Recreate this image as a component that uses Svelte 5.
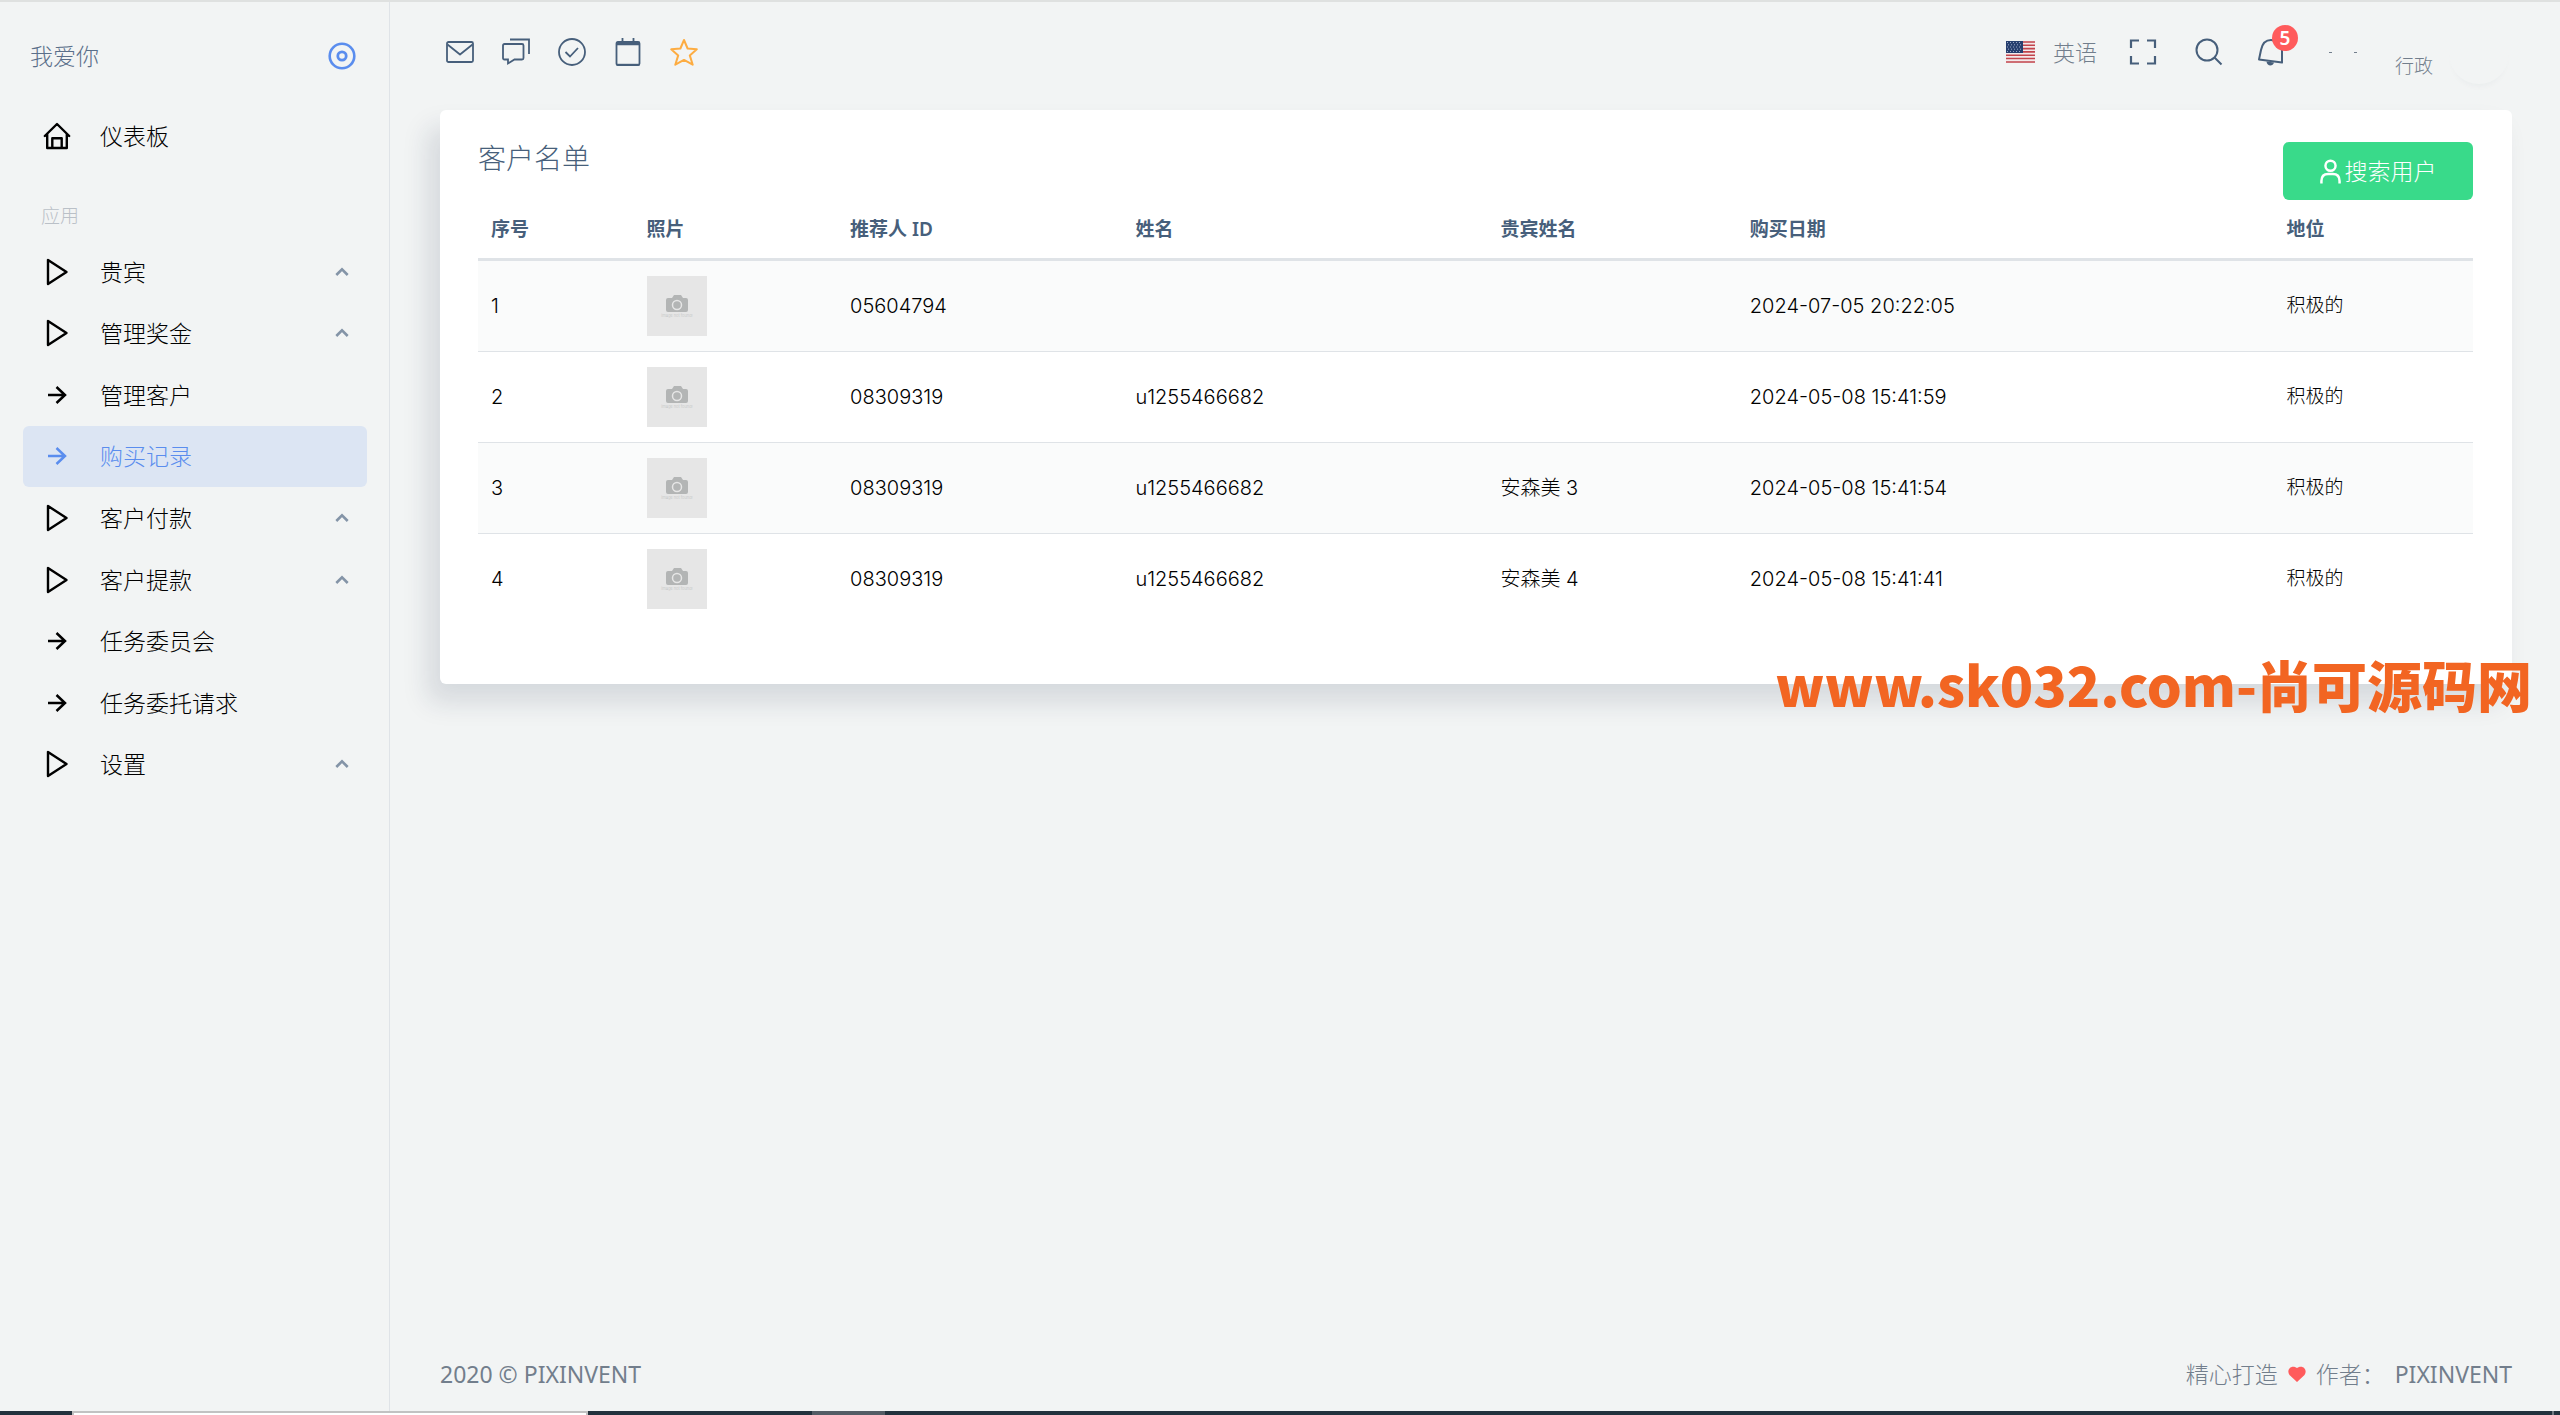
<script lang="ts">
	type MenuItem = { label: string; icon: 'play' | 'arrow'; group?: boolean; active?: boolean };

	const menu: MenuItem[] = [
		{ label: '贵宾', icon: 'play', group: true },
		{ label: '管理奖金', icon: 'play', group: true },
		{ label: '管理客户', icon: 'arrow' },
		{ label: '购买记录', icon: 'arrow', active: true },
		{ label: '客户付款', icon: 'play', group: true },
		{ label: '客户提款', icon: 'play', group: true },
		{ label: '任务委员会', icon: 'arrow' },
		{ label: '任务委托请求', icon: 'arrow' },
		{ label: '设置', icon: 'play', group: true }
	];

	const columns = ['序号', '照片', '推荐人 ID', '姓名', '贵宾姓名', '购买日期', '地位'];

	const rows = [
		{ referrer: '05604794', name: '', vip: '', date: '2024-07-05 20:22:05' },
		{ referrer: '08309319', name: 'u1255466682', vip: '', date: '2024-05-08 15:41:59' },
		{ referrer: '08309319', name: 'u1255466682', vip: '安森美 3', date: '2024-05-08 15:41:54' },
		{ referrer: '08309319', name: 'u1255466682', vip: '安森美 4', date: '2024-05-08 15:41:41' }
	];
</script>

<div class="page">
	<div class="shell">
		<aside class="sidebar">
			<div class="brand">
				<a href="#home">我爱你</a>
				<button type="button" class="icon-btn pin" aria-label="Toggle menu">
					<svg viewBox="0 0 28 28" fill="none" stroke="currentColor">
						<circle cx="14" cy="14" r="12.3" stroke-width="2.6" />
						<circle cx="14" cy="14" r="4.2" stroke-width="2.8" />
					</svg>
				</button>
			</div>

			<nav>
				<a class="item" href="#dashboard">
					<svg class="item-icon" viewBox="0 0 28 28" fill="none" stroke="currentColor" stroke-width="2.4" stroke-linejoin="round" stroke-linecap="round">
						<path d="M1.8 14 14 2l12.2 12M4.2 12v14h19.6V12M9.3 26V16.3h9.4V26" />
					</svg>
					<span>仪表板</span>
				</a>
				<h2>应用</h2>
				<ul>
					{#each menu as item}
						<li>
							<a class="item" class:active={item.active} href="#menu">
								{#if item.icon === 'play'}
									<svg class="item-icon" viewBox="0 0 28 28" fill="none" stroke="currentColor" stroke-width="2.4" stroke-linejoin="round">
										<path d="M5 2v24L23.500 14z" />
									</svg>
								{:else}
									<svg class="item-icon" viewBox="0 0 28 28" fill="none" stroke="currentColor" stroke-width="2.5">
										<path d="M5 14h17M13.500 6l8.500 8-8.500 8" />
									</svg>
								{/if}
								<span>{item.label}</span>
								{#if item.group}
									<svg class="chevron" viewBox="0 0 14 14" fill="none" stroke="currentColor" stroke-width="2.6">
										<path d="M1.300 10 7 4.300l5.700 5.700" />
									</svg>
								{/if}
							</a>
						</li>
					{/each}
				</ul>
			</nav>
		</aside>

		<main>
			<header>
				<div class="shortcuts">
					<button type="button" class="icon-btn" aria-label="Email">
						<svg viewBox="0 0 28 28" fill="none" stroke="currentColor" stroke-width="1.8" stroke-linejoin="round">
							<rect x="1" y="4" width="26" height="20" rx="1.5" />
							<path d="m1.500 6.500 12.500 10 12.500-10" />
						</svg>
					</button>
					<button type="button" class="icon-btn" aria-label="Chat">
						<svg viewBox="0 0 28 28" fill="none" stroke="currentColor" stroke-width="1.8">
							<path d="M2.500 6h17.500q1.500 0 1.500 1.500V20q0 1.500-1.500 1.500h-7.500L6 25.500v-4H2.500Q1 21.500 1 20V7.500Q1 6 2.500 6z" />
							<path d="M8 1.500h19V16" />
						</svg>
					</button>
					<button type="button" class="icon-btn" aria-label="Todo">
						<svg viewBox="0 0 28 28" fill="none" stroke="currentColor" stroke-width="1.8">
							<circle cx="14" cy="14" r="13" />
							<path d="m7.500 14 4.500 4.500 8-8.500" />
						</svg>
					</button>
					<button type="button" class="icon-btn" aria-label="Calendar">
						<svg viewBox="0 0 28 28" fill="none" stroke="currentColor" stroke-width="1.8">
							<rect x="2.500" y="4" width="23" height="23" rx="1.500" />
							<path d="M8.500 0v4M19.500 0v4" />
							<path d="M2.500 5.500h23" stroke-width="3.500" />
							<path d="M2.500 26.800h23" stroke-width="2" />
						</svg>
					</button>
					<button type="button" class="icon-btn star" aria-label="Bookmarks">
						<svg viewBox="0 0 28 28" fill="none" stroke="currentColor" stroke-width="2" stroke-linejoin="round">
							<path d="m14 2 3.600 8.500 9.200.8-7 6.100 2.900 9.300-8.700-4.800-8.700 4.800 2.900-9.300-7-6.100 9.200-.8z" />
						</svg>
					</button>
				</div>

				<div class="tools">
					<button type="button" class="language">
						<svg class="flag" viewBox="0 0 29 24">
							<rect width="29" height="22" y="1" fill="#f3e9ea" />
							<path d="M0 2h29M0 5.300h29M0 8.600h29M0 11.900h29M0 15.200h29M0 18.500h29M0 22h29" stroke="#c2444c" stroke-width="1.600" />
							<rect y="1" width="17" height="12" fill="#273f6f" />
							<path d="M1 2.500h15M2 4.800h14M1 7h15M2 9.200h14M1 11.500h15" stroke="#9aa8c5" stroke-width="1" stroke-dasharray="1 2" />
						</svg>
						<span>英语</span>
					</button>
					<button type="button" class="icon-btn" aria-label="Fullscreen">
						<svg viewBox="0 0 28 28" fill="none" stroke="currentColor" stroke-width="2.2">
							<path d="M2 10V2.500h8M18 2.500h8V10M26 18v7.500h-8M10 25.500H2V18" />
						</svg>
					</button>
					<button type="button" class="icon-btn search" aria-label="Search">
						<svg viewBox="0 0 28 28" fill="none" stroke="currentColor" stroke-width="2">
							<circle cx="12" cy="12" r="10.500" />
							<path d="m19.500 19.500 7 7" />
						</svg>
					</button>
					<button type="button" class="icon-btn bell" aria-label="Notifications">
						<svg viewBox="0 0 28 28" fill="none" stroke="currentColor" stroke-width="2">
							<path d="M2 21.500 25 24.500V13C25 6 19 2 14 2 8 2 5 7 4 12z" stroke-linejoin="round" />
							<path d="M9.500 23.500c.5 5 6.500 5 7.500 1z" fill="currentColor" stroke="none" />
						</svg>
						<span class="badge">5</span>
					</button>
					<div class="user">
						<span class="user-name"><i></i><i></i></span>
						<span class="user-role">行政</span>
						<span class="avatar"></span>
					</div>
				</div>
			</header>

			<section class="card">
				<div class="card-head">
					<h1>客户名单</h1>
					<button type="button" class="search-user">
						<svg viewBox="0 0 22 26" fill="none" stroke="currentColor" stroke-width="2.6">
							<circle cx="11" cy="7" r="5.300" />
							<path d="M1.500 25.500V23q0-7.500 7-7.500h5q7 0 7 7.500v2.500" />
						</svg>
						搜索用户
					</button>
				</div>

				<table>
					<colgroup>
						<col class="col-no" />
						<col class="col-photo" />
						<col class="col-ref" />
						<col class="col-name" />
						<col class="col-vip" />
						<col class="col-date" />
						<col class="col-status" />
					</colgroup>
					<thead>
						<tr>
							{#each columns as column}
								<th scope="col">{column}</th>
							{/each}
						</tr>
					</thead>
					<tbody>
						{#each rows as row, i}
							<tr>
								<td>{i + 1}</td>
								<td>
									<svg class="photo" viewBox="0 0 60 60" role="img" aria-label="Photo">
										<rect width="60" height="60" fill="#e6e6e6" />
										<path d="M21 22h4l2-3h7l2 3h3q2 0 2 2v10q0 2-2 2H21q-2 0-2-2V24q0-2 2-2z" fill="#b3b5b5" />
										<circle cx="30" cy="29" r="4.500" fill="#b3b5b5" stroke="#e6e6e6" stroke-width="1.500" />
										<text x="30" y="41" text-anchor="middle">image not found!</text>
									</svg>
								</td>
								<td>{row.referrer}</td>
								<td>{row.name}</td>
								<td>{row.vip}</td>
								<td>{row.date}</td>
								<td class="status">积极的</td>
							</tr>
						{/each}
					</tbody>
				</table>

				<div class="watermark">www.sk032.com-尚可源码网</div>
			</section>

			<footer>
				<span class="latin">2020 © PIXINVENT</span>
				<span class="credit">
					精心打造
					<svg viewBox="0 0 18 16" aria-hidden="true">
						<path d="M9 16 1.500 9C-2 4 3-2 9 2c6-4 11 2 7.500 7z" fill="#ff5b5c" />
					</svg>
					作者：
					<a class="latin" href="#pixinvent">PIXINVENT</a>
				</span>
			</footer>
		</main>
	</div>

	<div class="taskbar">
		<span class="task-window"></span>
		<span class="task-tab"></span>
		<span class="task-end"></span>
	</div>
</div>

<style>
	:global(body) {
		margin: 0;
		background: #f2f4f4;
	}

	.page {
		display: flex;
		flex-direction: column;
		box-sizing: border-box;
		min-height: 100vh;
		border-top: 2px solid #dfe1e0;
		background: #f2f4f4;
		color: #727e8c;
		font-family: 'Noto Sans', 'Noto Sans CJK SC', sans-serif;
		font-size: 23px;
		font-weight: 300;
		line-height: 32px;
	}

	.shell {
		display: flex;
		flex: 1;
	}

	a {
		color: inherit;
		text-decoration: none;
	}

	button {
		padding: 0;
		border: 0;
		background: none;
		color: inherit;
		font: inherit;
		cursor: pointer;
	}

	svg {
		display: block;
		flex: none;
	}

	.sidebar {
		flex: none;
		box-sizing: border-box;
		width: 390px;
		padding: 0 22px 0 23px;
		border-right: 1px solid #dfe3e7;
	}

	.brand {
		display: flex;
		align-items: center;
		justify-content: space-between;
		box-sizing: border-box;
		height: 103px;
		padding: 4px 11px 0 7px;
		color: #5a6f8a;
	}

	.icon-btn {
		position: relative;
		width: 28px;
		height: 28px;
		color: #475f7b;
	}

	.icon-btn svg {
		width: 28px;
		height: 28px;
	}

	.pin {
		color: #5a8dee;
	}

	.item {
		display: flex;
		align-items: center;
		box-sizing: border-box;
		height: 62px;
		padding: 0 18px 0 20px;
		border-radius: 6px;
		color: #000;
	}

	li .item {
		height: 100%;
	}

	.item-icon {
		width: 28px;
		height: 28px;
		margin-right: 29px;
	}

	.item.active {
		background: #dce5f3;
		color: #5a8dee;
	}

	.chevron {
		width: 14px;
		height: 14px;
		margin-left: auto;
		color: #8494a7;
	}

	h2 {
		margin: 31px 0 7px 18px;
		color: #bac0c7;
		font-size: 19px;
		font-weight: 300;
		line-height: 36px;
	}

	ul {
		display: grid;
		grid-auto-rows: 1fr;
		min-height: 554px;
		margin: 0;
		padding: 0;
		list-style: none;
	}

	main {
		display: flex;
		flex: 1;
		flex-direction: column;
		min-width: 0;
		padding: 0 48px 0 50px;
	}

	header {
		display: flex;
		align-items: center;
		justify-content: space-between;
		height: 100px;
		margin-bottom: 8px;
	}

	.shortcuts {
		display: flex;
		gap: 28px;
		padding-left: 6px;
	}

	.icon-btn.star {
		color: #fdac41;
	}

	.tools {
		display: flex;
		align-items: center;
	}

	.language {
		display: flex;
		align-items: center;
		gap: 18px;
		margin-right: 32px;
		font-size: 22px;
	}

	.flag {
		width: 29px;
		height: 24px;
	}

	.search {
		margin: 0 34px 0 38px;
	}

	.badge {
		position: absolute;
		top: -13px;
		right: -13px;
		width: 26px;
		height: 26px;
		border-radius: 50%;
		background: #ff5b5c;
		color: #fff;
		font-size: 19px;
		font-weight: 600;
		line-height: 26px;
	}

	.user {
		display: flex;
		align-items: center;
		margin-left: 44px;
	}

	.user-name {
		display: flex;
		gap: 22px;
		margin-right: 38px;
	}

	.user-name i {
		width: 3px;
		height: 1px;
		background: #727e8c;
	}

	.user-role {
		padding-top: 28px;
		font-size: 19px;
	}

	.avatar {
		width: 60px;
		height: 60px;
		margin: 4px 3px 0 16px;
		border-radius: 50%;
		background: #f2f4f4;
		box-shadow: 0 6px 6px -4px rgba(25, 42, 70, 0.04);
	}

	.card {
		position: relative;
		padding: 32px 39px 60px 38px;
		border-radius: 6px;
		background: #fff;
		box-shadow: -12px 18px 27px 0 rgba(25, 42, 70, 0.13);
	}

	.card-head {
		display: flex;
		align-items: flex-start;
		justify-content: space-between;
	}

	h1 {
		margin: 0;
		color: #475f7b;
		font-size: 28px;
		font-weight: 300;
		line-height: 32px;
	}

	.search-user {
		display: flex;
		align-items: center;
		justify-content: center;
		gap: 4px;
		width: 190px;
		height: 58px;
		border-radius: 6px;
		background: #39da8a;
		color: #fff;
	}

	.search-user svg {
		width: 21px;
		height: 25px;
	}

	table {
		width: 100%;
		border-collapse: collapse;
		table-layout: fixed;
		color: #000;
		font-family: Inter, 'Noto Sans CJK SC', sans-serif;
		font-size: 20px;
	}

	.col-no {
		width: 7.8%;
	}

	.col-photo {
		width: 10.2%;
	}

	.col-ref {
		width: 14.3%;
	}

	.col-name {
		width: 18.3%;
	}

	.col-vip {
		width: 12.5%;
	}

	.col-date {
		width: 26.9%;
	}

	.col-status {
		width: 10%;
	}

	th {
		height: 58px;
		padding: 0 13px;
		border-bottom: 3px solid #dfe3e7;
		color: #475f7b;
		font-family: 'Noto Sans', 'Noto Sans CJK SC', sans-serif;
		font-size: 19px;
		font-weight: 600;
		text-align: left;
	}

	td {
		height: 60px;
		padding: 15px 13px;
		font-weight: 300;
	}

	.status {
		font-size: 19px;
	}

	tbody tr + tr td {
		border-top: 1px solid #dfe3e7;
	}

	tbody tr:nth-child(odd) {
		background: #fafbfb;
	}

	.photo {
		width: 60px;
		height: 60px;
	}

	.photo text {
		fill: #c0c2c2;
		font-size: 4px;
	}

	.watermark {
		position: absolute;
		right: -20px;
		bottom: -29px;
		color: #f26522;
		font-family: 'Noto Sans CJK SC', sans-serif;
		font-size: 55px;
		font-weight: 900;
		line-height: 60px;
		white-space: nowrap;
	}

	footer {
		display: flex;
		justify-content: space-between;
		margin-top: auto;
		padding-bottom: 21px;
	}

	.latin {
		font-weight: 400;
	}

	.credit {
		display: flex;
		align-items: center;
		gap: 10px;
	}

	.credit svg {
		width: 18px;
		height: 16px;
	}

	.taskbar {
		display: flex;
		height: 4px;
		padding: 0 6px 0 72px;
		background: #22323d;
	}

	.task-window {
		box-sizing: border-box;
		width: 516px;
		border: 2px solid #c1c2c2;
		border-bottom: 0;
		background: #fff;
	}

	.task-tab {
		width: 73px;
		margin-left: 224px;
		background: #535c65;
	}

	.task-end {
		width: 2px;
		margin-left: auto;
		background: #707a82;
	}
</style>
